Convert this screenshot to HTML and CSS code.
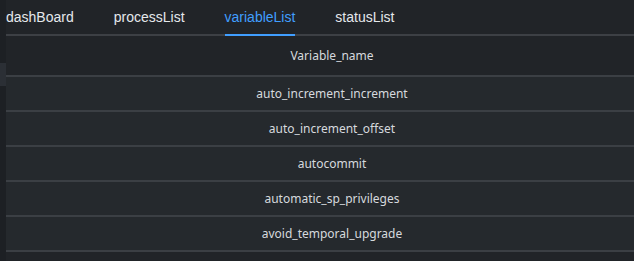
FILE: index.html
```html
<!DOCTYPE html>
<html lang="en">

<head>
  <meta charset="UTF-8">
  <meta name="viewport" content="width=device-width, initial-scale=1.0">
  <title>variableList</title>
  <link rel="stylesheet" href="styles.css">
</head>

<body>
  <div class="page">
    <div class="side-scroll">
      <div class="thumb"></div>
    </div>

    <div class="main">
      <div class="tabs">
        <div class="tab">dashBoard</div>
        <div class="tab">processList</div>
        <div class="tab active">variableList</div>
        <div class="tab">statusList</div>
      </div>

      <table class="var-table">
        <thead>
          <tr><th>Variable_name</th></tr>
        </thead>
        <tbody>
          <tr><td>auto_increment_increment</td></tr>
          <tr><td>auto_increment_offset</td></tr>
          <tr><td>autocommit</td></tr>
          <tr><td>automatic_sp_privileges</td></tr>
          <tr><td>avoid_temporal_upgrade</td></tr>
        </tbody>
      </table>
    </div>
  </div>
</body>

</html>
```

FILE: styles.css
```css
html,
body {
  margin: 0;
  padding: 0;
  background: #212428;
  overflow: hidden;
}

.page {
  display: flex;
  height: 261px;
}

/* narrow scrollbar strip on the left */
.side-scroll {
  width: 6px;
  flex-shrink: 0;
  background: #1d2024;
  padding-top: 63px;
}

.side-scroll .thumb {
  height: 23px;
  background: #2b2f35;
}

.main {
  width: 652px;
  flex-shrink: 0;
}

.tabs {
  display: flex;
  height: 34px;
  border-bottom: 2px solid #3d4045;
  font-family: "Liberation Sans", Arial, sans-serif;
  font-size: 14px;
  color: #e5e8ec;
}

.tab {
  padding: 0 20px;
  line-height: 34px;
  position: relative;
}

.tab:first-child {
  padding-left: 0;
}

.tab.active {
  color: #409eff;
}

.tab.active::after {
  content: "";
  position: absolute;
  left: 20px;
  right: 20px;
  bottom: -2px;
  height: 2px;
  background: #409eff;
}

.var-table {
  width: 100%;
  border-collapse: collapse;
  font-family: "Noto Sans", sans-serif;
  font-size: 12px;
  color: #d6d9de;
  background: #25292d;
}

.var-table th,
.var-table td {
  text-align: center;
  font-weight: normal;
  padding: 0;
  border-bottom: 2px solid #3b3f44;
}

.var-table th {
  height: 39px;
  background: #212428;
}

.var-table td {
  height: 33px;
}
```
